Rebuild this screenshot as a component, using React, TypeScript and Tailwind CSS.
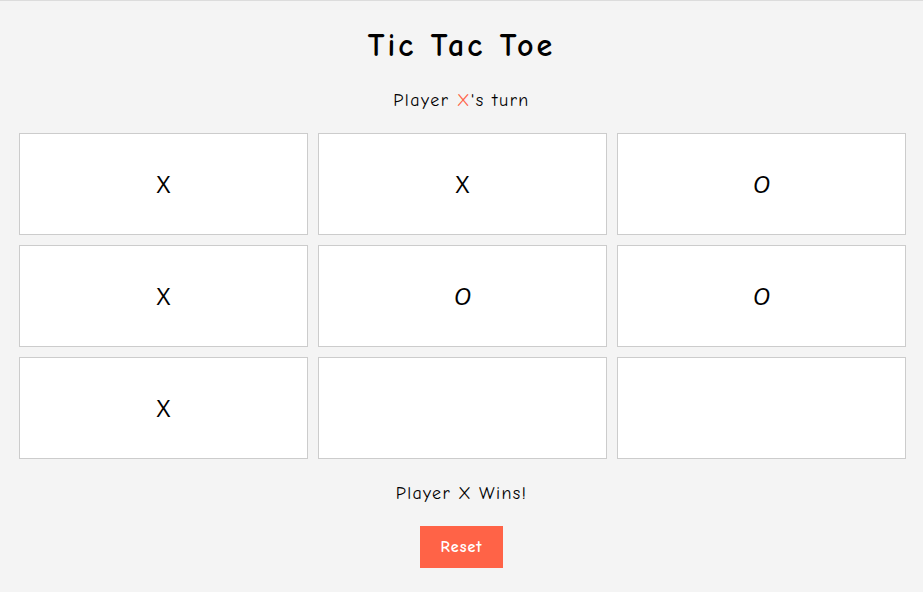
import { useState } from "react"

type Cell = "X" | "O" | null

const initialBoard: Cell[] = ["X", "X", "O", "X", "O", "O", "X", null, null]

export default function App() {
  const [board, setBoard] = useState<Cell[]>(initialBoard)

  return (
    <div
      className="min-h-[592px] w-full border-t border-[#dcdcdc] bg-[#f4f4f4] flex flex-col items-center text-black"
      style={{ fontFamily: '"Comic Sans MS", "Comic Neue", "Noto Sans", sans-serif' }}
    >
      <h1 className="mt-[26px] text-[32px] leading-[37px] font-bold tracking-[3px]">
        Tic Tac Toe
      </h1>
      <p className="mt-[25px] text-[18px] leading-6 tracking-[1.5px]">
        Player <span className="text-[#ff6347]">X</span>'s turn
      </p>
      <div className="mt-[20px] w-full pl-[19px] pr-[17px] grid grid-cols-3 gap-[10px]">
        {board.map((cell, i) => (
          <button
            key={i}
            onClick={() => {
              if (cell) return
              const next = [...board]
              next[i] = "X"
              setBoard(next)
            }}
            className="h-[102px] bg-white border border-[#cccccc] flex items-center justify-center text-[24px]"
            style={{ fontFamily: '"Open Sans", "DejaVu Sans", sans-serif' }}
          >
            {cell === "O" ? <span className="italic">O</span> : cell}
          </button>
        ))}
      </div>
      <p className="mt-[23px] text-[18px] leading-6 tracking-[1.3px]">Player X Wins!</p>
      <button
        onClick={() => setBoard(Array(9).fill(null))}
        className="mt-[20px] w-[83px] h-[42px] bg-[#ff6347] text-white font-bold text-[16px] tracking-[1px]"
      >
        Reset
      </button>
    </div>
  )
}
